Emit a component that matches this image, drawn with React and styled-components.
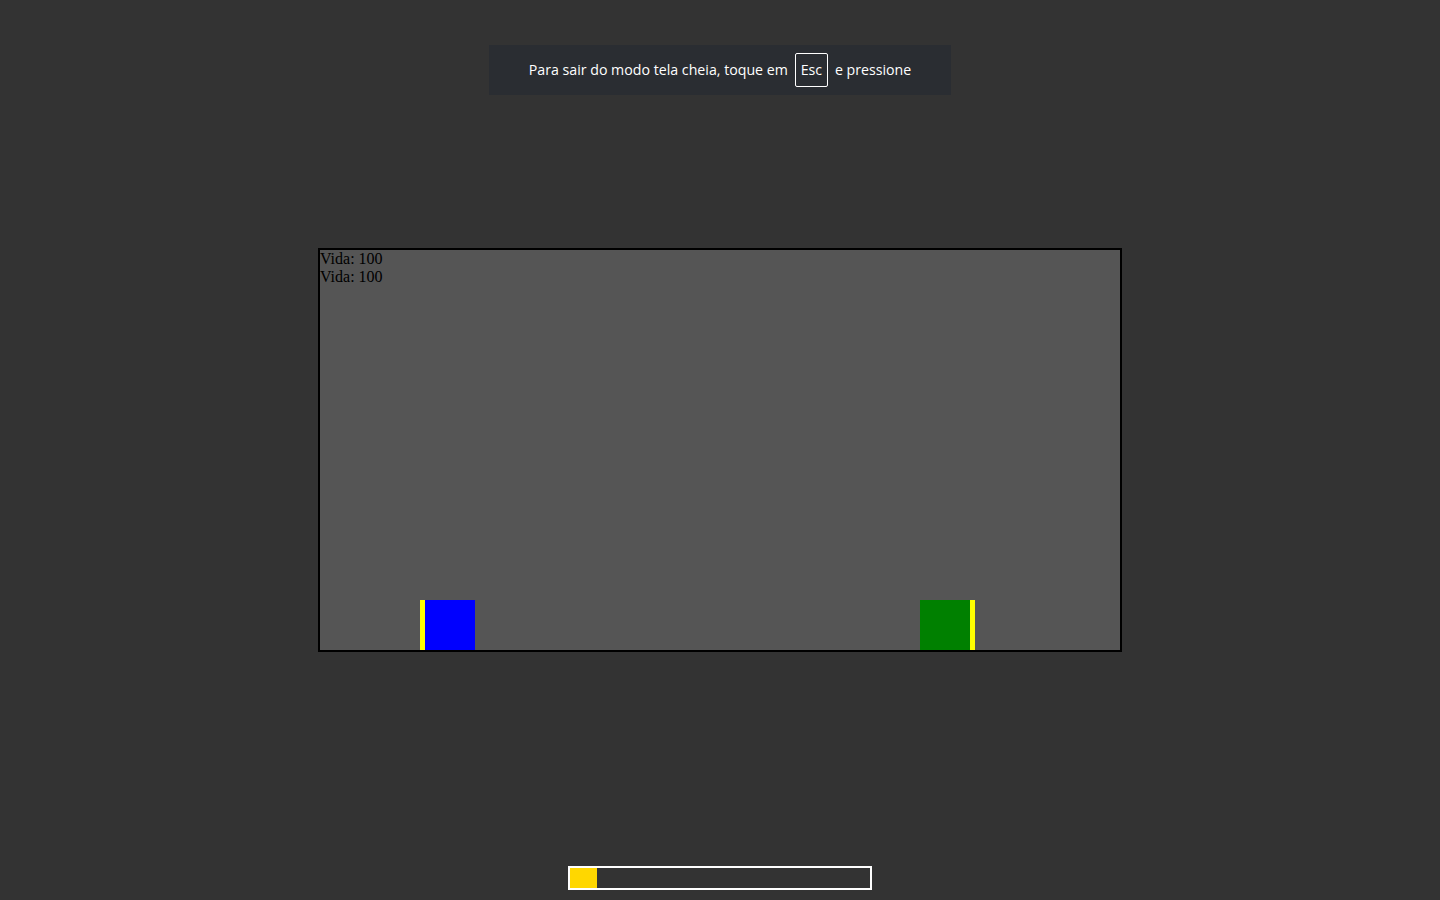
import React from "react";
import styled, { createGlobalStyle } from "styled-components";

const GlobalStyle = createGlobalStyle`
  html, body {
    margin: 0;
    padding: 0;
    background: #333333;
  }
  body {
    font-family: "Liberation Serif", "Times New Roman", serif;
  }
`;

const Page = styled.div`
  position: relative;
  height: 100vh;
  display: grid;
  grid-template-rows: 1fr auto 1fr;
  justify-items: center;
  background: #333333;
  overflow: hidden;
`;

const Toast = styled.div`
  position: absolute;
  top: 45px;
  left: 50%;
  transform: translateX(-50%);
  height: 50px;
  width: 462px;
  box-sizing: border-box;
  padding-bottom: 2px;
  display: flex;
  align-items: center;
  justify-content: center;
  gap: 7px;
  background: #2a2d32;
  color: #ffffff;
  font-family: "Open Sans", "Noto Sans", sans-serif;
  font-size: 14.2px;
  white-space: nowrap;
`;

const Key = styled.span`
  display: inline-flex;
  align-items: center;
  justify-content: center;
  width: 33px;
  height: 34px;
  margin-top: 2px;
  padding-bottom: 2px;
  box-sizing: border-box;
  border: 1px solid #ffffff;
  border-radius: 2px;
`;

const Arena = styled.div`
  grid-row: 2;
  position: relative;
  width: 800px;
  height: 400px;
  background: #555555;
  border: 2px solid #000000;
  font-size: 16px;
  line-height: 18px;
  color: #000000;
`;

const Life = styled.div`
  padding-left: 0;
`;

const Fighter = styled.div`
  position: absolute;
  bottom: 0;
  left: ${(p) => p.$x}px;
  width: 55px;
  height: 50px;
  background: ${(p) => p.$color};
  box-sizing: border-box;
  ${(p) =>
    p.$facing === "left"
      ? "border-left: 5px solid #ffff00;"
      : "border-right: 5px solid #ffff00;"}
`;

const Footer = styled.div`
  grid-row: 3;
  align-self: end;
  padding-bottom: 10px;
`;

const Meter = styled.div`
  width: 300px;
  height: 20px;
  border: 2px solid #ffffff;
  background: #333333;
`;

const Fill = styled.div`
  height: 100%;
  background: #ffd700;
`;

export default function App() {
  const charge = 9;
  return (
    <>
      <GlobalStyle />
      <Page>
        <Toast>
          <span>Para sair do modo tela cheia, toque em</span>
          <Key>Esc</Key>
          <span>e pressione</span>
        </Toast>
        <Arena>
          <Life>Vida: 100</Life>
          <Life>Vida: 100</Life>
          <Fighter $x={100} $color="#0000ff" $facing="left" />
          <Fighter $x={600} $color="#008000" $facing="right" />
        </Arena>
        <Footer>
          <Meter>
            <Fill style={{ width: `${charge}%` }} />
          </Meter>
        </Footer>
      </Page>
    </>
  );
}
